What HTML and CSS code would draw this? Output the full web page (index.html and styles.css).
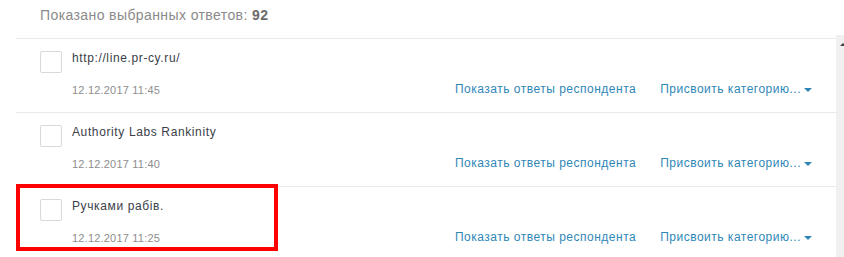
FILE: index.html
```html
<!DOCTYPE html>
<html lang="ru">
<head>
<meta charset="utf-8">
<title>Ответы</title>
<link rel="stylesheet" href="styles.css">
</head>
<body>
<div class="page">
  <div class="summary">Показано выбранных ответов: <b>92</b></div>
  <div class="panel">
    <div class="list">
      <div class="row">
        <span class="check"></span>
        <div class="body">
          <div class="title">http://line.pr-cy.ru/</div>
          <div class="meta">
            <span class="date">12.12.2017 11:45</span>
            <div class="actions">
              <a class="link">Показать ответы респондента</a>
              <a class="link dropdown">Присвоить категорию... <span class="caret"></span></a>
            </div>
          </div>
        </div>
      </div>
      <div class="row">
        <span class="check"></span>
        <div class="body">
          <div class="title">Authority Labs Rankinity</div>
          <div class="meta">
            <span class="date">12.12.2017 11:40</span>
            <div class="actions">
              <a class="link">Показать ответы респондента</a>
              <a class="link dropdown">Присвоить категорию... <span class="caret"></span></a>
            </div>
          </div>
        </div>
      </div>
      <div class="row marked">
        <span class="check"></span>
        <div class="body">
          <div class="title">Ручками рабів.</div>
          <div class="meta">
            <span class="date">12.12.2017 11:25</span>
            <div class="actions">
              <a class="link">Показать ответы респондента</a>
              <a class="link dropdown">Присвоить категорию... <span class="caret"></span></a>
            </div>
          </div>
        </div>
        <span class="highlight"></span>
      </div>
    </div>
    <div class="scrollbar"><span class="up"></span></div>
  </div>
</div>
</body>
</html>
```

FILE: styles.css
```css
html, body {
  margin: 0;
  padding: 0;
  background: #fff;
}
body {
  font-family: "Liberation Sans", Arial, sans-serif;
  width: 844px;
  height: 257px;
  overflow: hidden;
}
.page {
  display: flex;
  flex-direction: column;
}
.summary {
  height: 35px;
  box-sizing: border-box;
  padding: 7px 0 0 40px;
  font-size: 14px;
  line-height: 16px;
  letter-spacing: 0.4px;
  color: #8a8a8a;
}
.summary b {
  color: #6b6b6b;
}
.panel {
  display: flex;
  align-items: stretch;
}
.list {
  flex: 1;
  margin: 3px 0 0 16px;
  border-top: 1px solid #e9e9e9;
}
.row {
  position: relative;
  display: flex;
  height: 74px;
  box-sizing: border-box;
  padding: 12px 24px 0 24px;
  border-bottom: 1px solid #e9e9e9;
}
.check {
  flex: none;
  width: 22px;
  height: 22px;
  box-sizing: border-box;
  border: 1px solid #d9d9d9;
  border-radius: 2px;
  background: #fff;
}
.body {
  flex: 1;
  margin-left: 10px;
  display: flex;
  flex-direction: column;
}
.title {
  font-size: 12px;
  line-height: 14px;
  letter-spacing: 0.62px;
  color: #3b4049;
}
.meta {
  display: flex;
  align-items: center;
  margin-top: 17px;
}
.date {
  flex: 1;
  font-size: 11px;
  line-height: 16px;
  letter-spacing: 0.2px;
  color: #8d8d8d;
}
.actions {
  display: flex;
  align-items: center;
  gap: 24px;
  margin-top: -2px;
}
.link {
  font-size: 12px;
  line-height: 16px;
  letter-spacing: 0.5px;
  color: #2f87b7;
  cursor: pointer;
}
.dropdown {
  display: flex;
  align-items: center;
  gap: 3px;
}
.caret {
  width: 0;
  height: 0;
  border-left: 4px solid transparent;
  border-right: 4px solid transparent;
  border-top: 4px solid #2f87b7;
  margin-top: 1px;
}
.highlight {
  position: absolute;
  left: 0;
  top: -3px;
  width: 262px;
  height: 67px;
  box-sizing: border-box;
  border: 4px solid #ff0000;
  pointer-events: none;
}
.scrollbar {
  position: relative;
  flex: none;
  width: 8px;
  height: 222px;
  background: #f0f0f0;
}
.up {
  position: absolute;
  top: 8px;
  right: -2px;
  width: 0;
  height: 0;
  border-left: 3px solid transparent;
  border-right: 3px solid transparent;
  border-bottom: 3px solid #444;
}
```
